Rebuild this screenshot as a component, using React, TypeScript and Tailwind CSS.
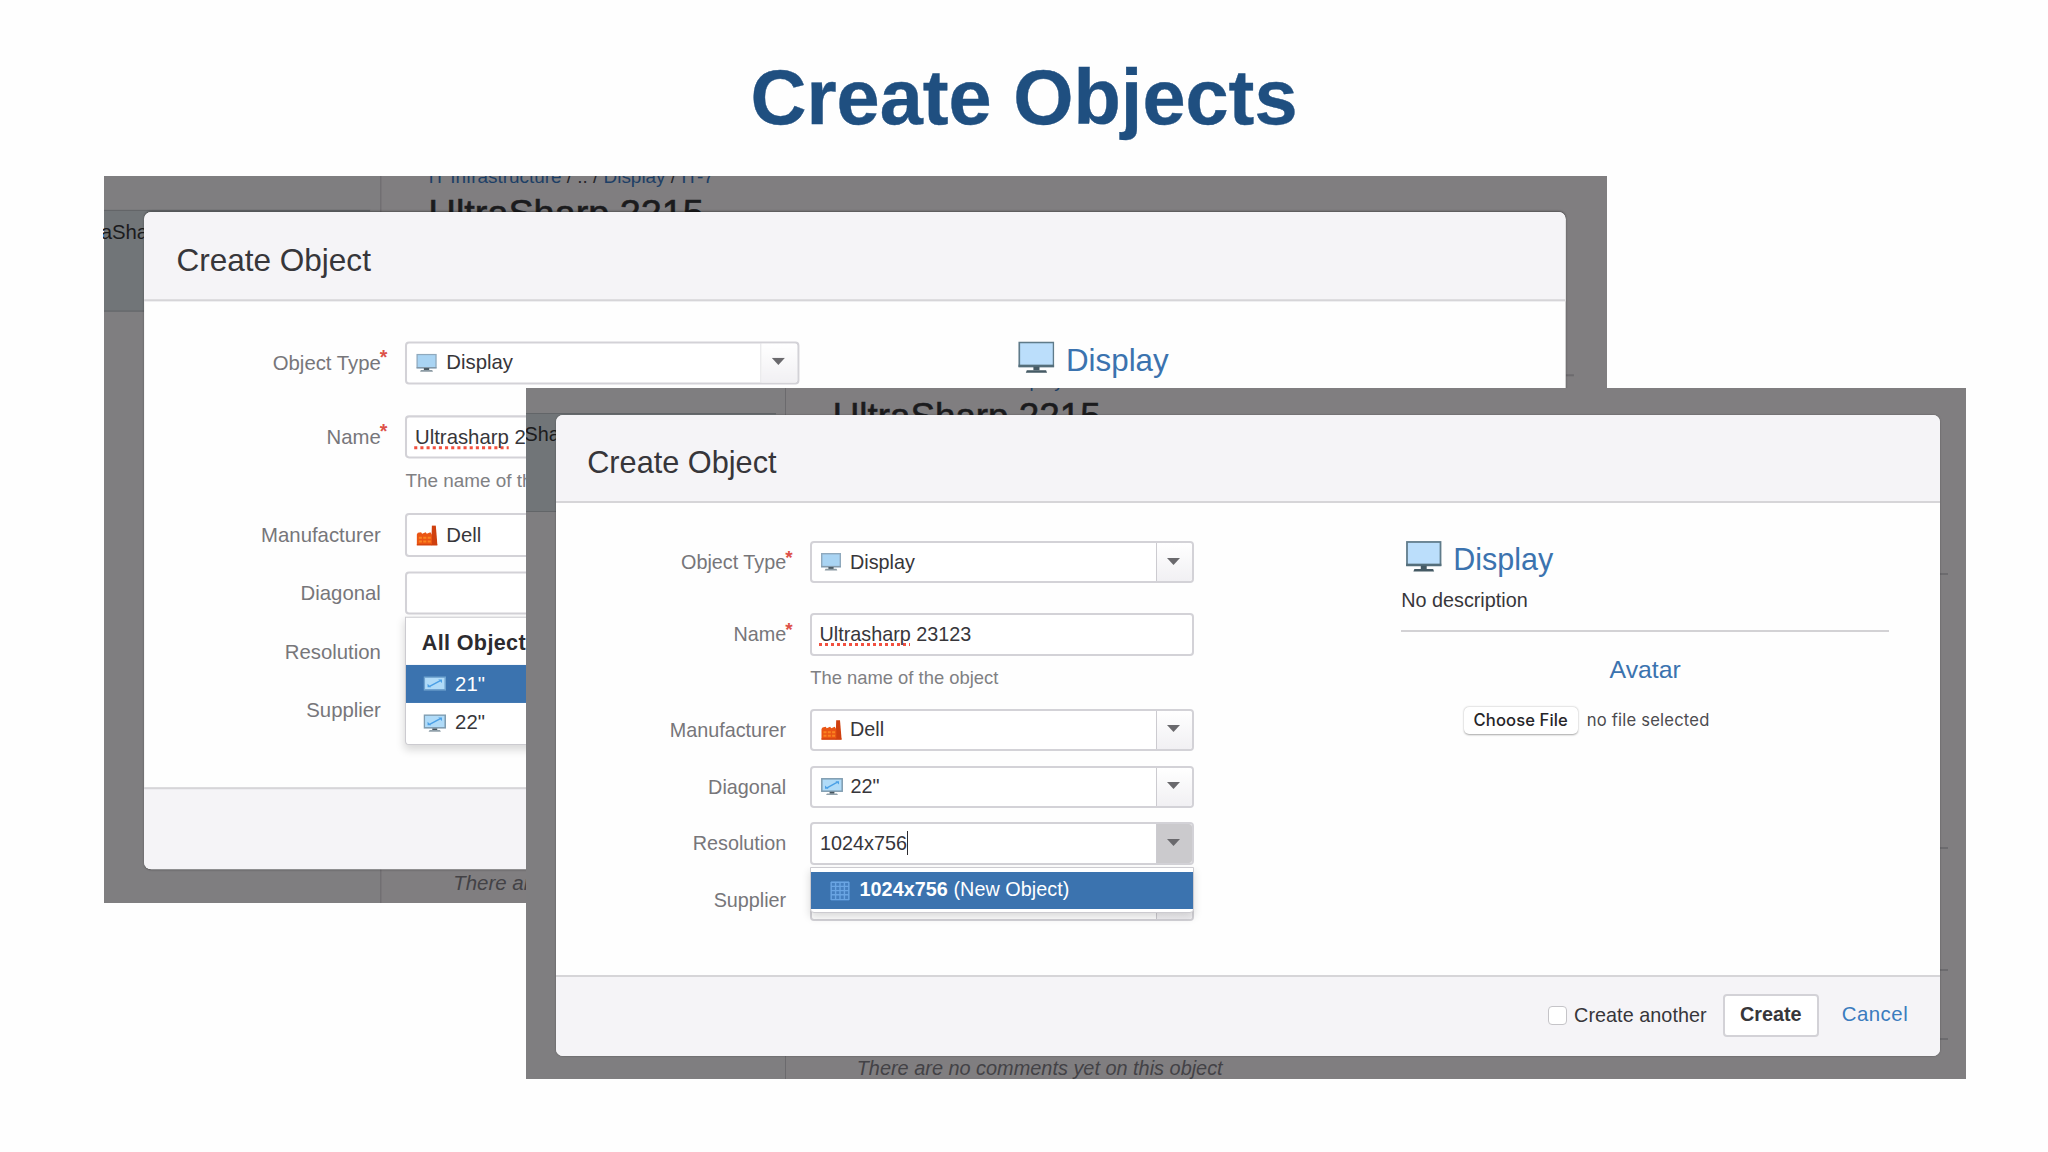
import React from 'react';

const MonitorIcon: React.FC<{ className?: string }> = ({ className }) => (
    <svg viewBox="0 0 36 32" className={className} preserveAspectRatio="none">
        <rect x="1" y="1" width="34" height="24" fill="#bbdefb" stroke="#5f7b8a" strokeWidth="1.8" />
        <rect x="0.2" y="23.4" width="35.6" height="2.6" fill="#546e7a" />
        <path d="M15 25.5h6v3.6h-6z" fill="#455a64" />
        <path d="M8.5 28.9h19l1 2.7h-21z" fill="#455a64" />
    </svg>
);

const SmallMonitorIcon: React.FC = () => (
    <svg viewBox="0 0 20 18" className="w-5 h-[18px] shrink-0">
        <rect x="0.7" y="0.7" width="18.6" height="13.2" fill="#a9d4f3" stroke="#8fa9bd" strokeWidth="1.4" />
        <path d="M0.3 13.4h19.4" stroke="#8398a8" strokeWidth="1" />
        <path d="M7.4 14h5.2v2.4H7.4z" fill="#4a5a64" />
        <path d="M4.5 15.8h11l.8 1.8H3.7z" fill="#8b9aa3" />
    </svg>
);

const DiagonalIcon: React.FC<{ stand?: boolean }> = ({ stand = true }) => (
    <svg viewBox="0 0 22 18" className="w-[22px] h-[18px] shrink-0">
        <rect x="0.8" y="0.8" width="20.4" height="12.4" fill="#b0dbf8" stroke={stand ? '#7f9cb0' : '#6fa3cf'} strokeWidth="1.5" />
        <path d="M6 9.8L16 4.4" fill="none" stroke="#4ba0e6" strokeWidth="1.4" />
        <path d="M4 10.8V7.4l3.6 3.4zM18 3.2v3.4l-3.6-3.4z" fill="#4ba0e6" />
        {stand && <path d="M8.6 13.8h4.8v2H8.6z" fill="#45545e" />}
        {stand && <path d="M6 15.4h10l1 1.7H5z" fill="#90a0aa" />}
    </svg>
);

const FactoryIcon: React.FC = () => (
    <svg viewBox="0 0 21 20" className="w-[21px] h-5 shrink-0">
        <path d="M15.2 0.3h3.8l1.6 19.2h-6z" fill="#cf400f" />
        <path d="M0.5 19.5V9l1-1.6 3.2-.6 1 1.4 3.4-1.4 1.2 1.4 3.4-1.4 1.6 2.4v10.3z" fill="#ea5514" />
        <path d="M0.5 18.4h20v1.3H0.5z" fill="#cf400f" />
        <path d="M2.5 11.2h3v2h-3zM6.8 11.2h3v2h-3zM11.1 11.2h3v2h-3zM2.5 14.8h3v2h-3zM6.8 14.8h3v2h-3zM11.1 14.8h3v2h-3z" fill="#fb8420" />
    </svg>
);

const GridIcon: React.FC = () => (
    <svg viewBox="0 0 20 20" className="w-5 h-5 shrink-0">
        <rect x="0.5" y="0.5" width="19" height="19" rx="1" fill="#457fbf" />
        <path d="M1.2 1v18M5.6 1v18M10 1v18M14.4 1v18M18.8 1v18M1 1.2h18M1 5.4h18M1 9.6h18M1 13.8h18M1 18.6h18" stroke="#6aa5e3" strokeWidth="1.4" />
    </svg>
);

const Arrow: React.FC<{ active?: boolean }> = ({ active }) => (
    <div className={`w-[36px] h-full shrink-0 flex justify-center rounded-r-[3px] border-l-[1.4px] border-[#cccbd0] pr-[3px] ${active ? 'bg-[#cbcacd]' : 'bg-linear-to-b from-white to-[#f1f0f3]'}`}>
        <svg viewBox="0 0 13 7" className="w-[13px] h-[7px] mt-[14.5px]">
            <path d="M0 0h13L6.5 7z" fill="#6a696d" />
        </svg>
    </div>
);

const Row: React.FC<{ label: string; required?: boolean; className?: string; children?: React.ReactNode }> = ({ label, required, className = '', children }) => (
    <div className={`flex gap-[23.8px] h-[42.3px] ${className}`}>
        <div className="relative w-[230.5px] text-right leading-[42px] text-[#77767a]">
            {label}
            {required && <span className="absolute left-[229.5px] -top-[4.5px] text-[19px] font-bold leading-[42px] text-[#dd5148]">*</span>}
        </div>
        <div className="relative w-[384px]">{children}</div>
    </div>
);

const Field: React.FC<{ icon?: React.ReactNode; select?: boolean; active?: boolean; children?: React.ReactNode }> = ({ icon, select, active, children }) => (
    <div className="flex h-full w-full items-center rounded-[4px] border-2 border-[#d3d2d7] bg-white">
        <div className="flex flex-1 items-center gap-[9px] pl-[9px] leading-[40px] text-[#37363a]">
            {icon}
            <span className="-mt-px">{children}</span>
        </div>
        {select && <Arrow active={active} />}
    </div>
);

const Misspelled: React.FC<{ children: React.ReactNode }> = ({ children }) => (
    <span className="underline decoration-dotted decoration-[#f2503f] decoration-[3px] underline-offset-[2px] [text-decoration-skip-ink:none]">{children}</span>
);

// Page below the modal, already dimmed by the blanket
const DimmedPage: React.FC = () => (
    <div className="flex h-[720px] w-[1480px] bg-[#807e80] text-[19.8px]">
        <div className="w-[269.5px] shrink-0 border-r border-[#6b6a6d] bg-[#7f7e80]">
            <div className="h-[33px] w-[259px]" />
            <div className="h-[99px] w-[259px] border-y border-[#626568] bg-[#717578]">
                <div className="-ml-[34px] pt-[9px] leading-[22px] text-[#1b1b1d]">UltraSharp 2215</div>
            </div>
        </div>
        <div className="flex flex-col justify-between">
            <div className="pl-[46.5px]">
                <div className="-mt-[11px] h-[24px] text-[18.4px] leading-[24px] text-[#26262a]">
                    <span className="text-[#1d3f66]">IT Infrastructure</span> / .. / <span className="text-[#1d3f66]">Display</span> / <span className="text-[#1d3f66]">IT-7</span>
                </div>
                <div className="pt-[3.5px] text-[36.8px] leading-[40px] text-[#1b1b1d] [-webkit-text-stroke:0.6px_#1b1b1d]">UltraSharp 2215</div>
            </div>
            <div className="mb-[20px] pl-[70.5px] text-[19.9px] leading-[24px] italic text-[#434246]">There are no comments yet on this object</div>
        </div>
    </div>
);

const Dialog: React.FC<{ name: string; diagonal: React.ReactNode; resolution: React.ReactNode }> = ({ name, diagonal, resolution }) => (
    <div className="flex h-[640.7px] w-[1384px] flex-col overflow-hidden rounded-[7px] bg-[#fefefe] text-[19.8px] shadow-[0_0_2px_rgba(0,0,0,0.35)]">
        <div className="flex h-[87.5px] shrink-0 items-center border-b-2 border-[#d6d5d8] bg-[#f5f4f7] pl-[31.5px] pt-[10px]">
            <h2 className="text-[30.7px] leading-[40px] text-[#37363a]">Create Object</h2>
        </div>
        <div className="flex flex-1 pt-[38.6px]">
            <div className="flex w-[845.5px] flex-col">
                <Row label="Object Type" required>
                    <Field icon={<SmallMonitorIcon />} select>Display</Field>
                </Row>
                <Row label="Name" required className="mt-[30px]">
                    <Field><span className="-ml-[1.5px]"><Misspelled>Ultrasharp</Misspelled> {name}</span></Field>
                </Row>
                <div className="h-[53.1px] pl-[254.5px] pt-[10px] text-[18.4px] leading-[24px] text-[#808083]">The name of the object</div>
                <Row label="Manufacturer">
                    <Field icon={<FactoryIcon />} select><span className="-ml-px">Dell</span></Field>
                </Row>
                <Row label="Diagonal" className="mt-[14.5px]">{diagonal}</Row>
                <Row label="Resolution" className="mt-[14.5px]">{resolution}</Row>
                <Row label="Supplier" className="mt-[14.5px]">
                    <Field select />
                </Row>
            </div>
            <div className="flex w-[488px] flex-col">
                <div className="flex h-[42px] items-start gap-[11.5px] pl-[5px]">
                    <MonitorIcon className="h-[31px] w-[35.5px]" />
                    <span className="text-[30.5px] leading-[37px] text-[#3b73af]">Display</span>
                </div>
                <div className="h-[49px] border-b-2 border-[#d3d2d5] pt-[5px] leading-[24px] text-[#37363a]">No description</div>
                <div className="pt-[23px] text-center text-[24.8px] leading-[30px] text-[#3b73af]">Avatar</div>
                <div className="mt-[22px] flex items-center gap-[9px] pl-[62.5px] font-[Inter,sans-serif] text-[16.6px] leading-[26px]">
                    <button className="h-[26.5px] w-[114px] rounded-[5px] bg-white font-medium tracking-[0.1px] text-[#262528] shadow-[0_0.5px_2px_rgba(0,0,0,0.35)]">Choose File</button>
                    <span className="tracking-[0.2px] text-[#4c4b4f]">no file selected</span>
                </div>
            </div>
        </div>
        <div className="flex h-[80.4px] shrink-0 items-center justify-end border-t-2 border-[#d6d5d8] bg-[#f5f4f7] pr-[31.5px] leading-[24px] text-[#37363a]">
            <span className="-mt-px mr-[7px] h-[19px] w-[19px] rounded-[4px] border-[1.5px] border-[#c5c4c8] bg-white" />
            <span className="-mt-[3.5px] tracking-[0.05px]">Create another</span>
            <button className="-mt-px ml-[16px] h-[43px] w-[96px] rounded-[4px] border-2 border-[#d3d2d7] bg-white pb-[3px] font-bold">Create</button>
            <span className="-mt-[4px] ml-[23px] text-[20.4px] tracking-[0.5px] text-[#3b7cbe]">Cancel</span>
        </div>
    </div>
);

const DiagonalPicker: React.FC = () => (
    <>
        <Field select active />
        <div className="absolute left-0 top-[43.8px] z-10 w-full rounded-b-[4px] border-[1.5px] border-[#cccbd0] bg-white pb-[3px] text-[#37363a] shadow-[0_4px_8px_rgba(0,0,0,0.15)]">
            <div className="h-[46.5px] pl-[15px] pt-[2px] text-[21px] font-bold leading-[43px] tracking-[0.35px] text-[#2c2b2f]">All Objects</div>
            <div className="flex h-[37px] items-center gap-[8.5px] bg-[#3b73af] pl-[17px] text-white">
                <div className="pt-[3px]"><DiagonalIcon stand={false} /></div>
                <span className="leading-[34px] -mt-px">21"</span>
            </div>
            <div className="flex h-[37px] items-center gap-[8.5px] pl-[17px]">
                <div className="pt-[3px]"><DiagonalIcon /></div>
                <span className="leading-[34px] -mt-[2px]">22"</span>
            </div>
        </div>
    </>
);

const ResolutionPicker: React.FC = () => (
    <>
        <Field select active>
            <span className="-ml-px flex items-center">1024x756<span className="h-[24px] w-[1.5px] bg-[#2c2b2f]" /></span>
        </Field>
        <div className="absolute left-0 top-[44.3px] z-10 h-[46px] w-full rounded-b-[4px] border-[1.5px] border-[#cccbd0] bg-white pt-[4px] shadow-[0_4px_8px_rgba(0,0,0,0.15)]">
            <div className="flex h-[37px] items-center gap-[10px] bg-[#3b73af] pl-[18.5px] text-white">
                <div className="pt-[2px]"><GridIcon /></div>
                <span className="leading-[33px] -mt-px tracking-[0.05px]"><b>1024x756</b> (New Object)</span>
            </div>
        </div>
    </>
);

// ends of table rules sticking out right of the modal
const Ticks: React.FC = () => (
    <>
        <div className="absolute left-[1423px] top-[193px] h-[2px] w-2 bg-[#6c6b6e]" />
        <div className="absolute left-[1423px] top-[467px] h-[2px] w-2 bg-[#6c6b6e]" />
        <div className="absolute left-[1423px] top-[588.5px] h-[2px] w-2 bg-[#6c6b6e]" />
        <div className="absolute left-[1423px] top-[658px] h-[2px] w-2 bg-[#6c6b6e]" />
    </>
);

const App: React.FC = () => {
    return (
        <div className="relative h-[1152px] w-[2048px] overflow-hidden bg-[#fefefe] font-['Liberation_Sans',Arial,sans-serif]">
            <h1 className="pt-[52px] text-center text-[77.5px] font-bold leading-[91px] text-[#1f4f80] [-webkit-text-stroke:0.4px_#1f4f80]">Create Objects</h1>

            <div className="absolute left-[103px] top-[175.6px] h-[727px] w-[1503.5px] overflow-hidden">
                <div className="relative left-[0.5px] top-[0.6px] w-[1480px] origin-top-left scale-[1.0272]">
                    <DimmedPage />
                    <Ticks />
                    <div className="absolute left-[39px] top-[34.6px]">
                        <Dialog name="23123" diagonal={<DiagonalPicker />} resolution={<Field select />} />
                    </div>
                </div>
            </div>

            <div className="absolute left-[525.8px] top-[388px] h-[690.5px] w-[1440.2px] overflow-hidden">
                <div className="relative -left-[9.1px] -top-[7.6px] w-[1480px]">
                    <DimmedPage />
                    <Ticks />
                    <div className="absolute left-[39px] top-[34.6px]">
                        <Dialog
                            name="23123"
                            diagonal={<Field icon={<DiagonalIcon />} select><span className="-ml-[1.5px]">22"</span></Field>}
                            resolution={<ResolutionPicker />}
                        />
                    </div>
                </div>
            </div>
        </div>
    );
};

export default App;
